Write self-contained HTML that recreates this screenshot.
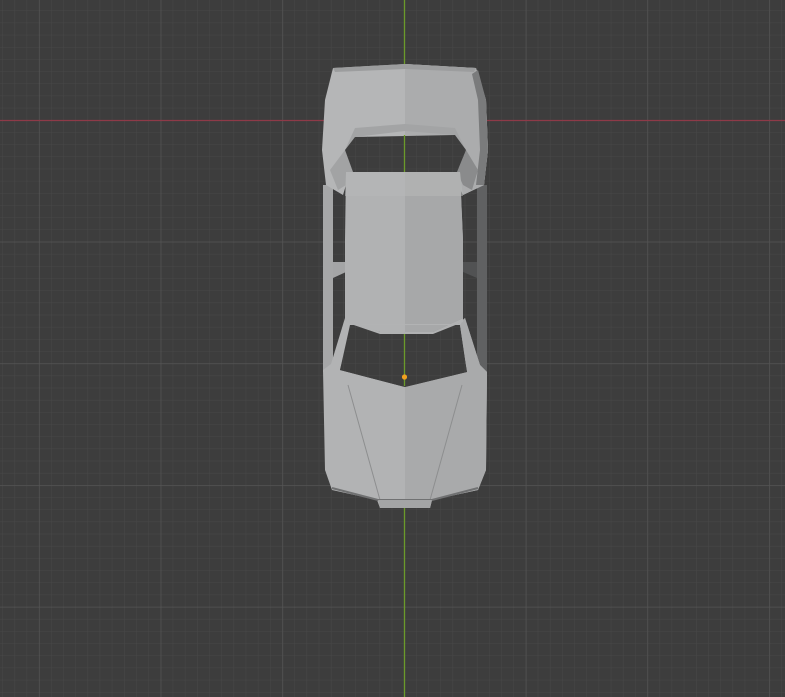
<!DOCTYPE html>
<html><head><meta charset="utf-8"><style>
html,body{margin:0;padding:0;background:#3d3d3d;width:785px;height:697px;overflow:hidden}
svg{display:block}
</style></head><body>
<svg width="785" height="697" viewBox="0 0 785 697" xmlns="http://www.w3.org/2000/svg">
<defs>
<pattern id="minor" x="2.3" y="-1.7" width="12.17" height="12.17" patternUnits="userSpaceOnUse">
<path d="M0 0V12.17M0 0H12.17" stroke="#484848" stroke-width="1" fill="none"/>
</pattern>
<pattern id="major" x="39" y="-1.7" width="121.7" height="121.7" patternUnits="userSpaceOnUse">
<path d="M0 0V121.7M0 0H121.7" stroke="#565656" stroke-width="1.2" fill="none"/>
</pattern>
</defs>
<rect width="785" height="697" fill="#3d3d3d"/>
<rect width="785" height="697" fill="url(#minor)"/>
<rect width="785" height="697" fill="url(#major)"/>
<line x1="0" y1="120.5" x2="785" y2="120.5" stroke="#8e3a48" stroke-width="1.3"/>
<line x1="404.5" y1="0" x2="404.5" y2="697" stroke="#6b9a2a" stroke-width="1.3"/>

<!-- side rails -->
<polygon points="323,185 333,185 333,372 323,372" fill="#a6a7a8"/>
<polygon points="477,185 487,185 487,372 477,372" fill="#606162"/>
<polygon points="333,262 346,262 346,272 333,278" fill="#a4a5a6"/>
<polygon points="463,262 477,262 477,278 463,272" fill="#515253"/>

<!-- rear section -->
<path fill="#b5b6b7" d="M333,68 L405,64 L476,68 L486,100 L488,150 L484,185 L463,195 L458,185 L346,185 L343,195 L326,185 L322,150 L325,100 Z"/>
<polygon points="405,64 476,68 486,100 488,150 484,185 463,195 458,185 405,185" fill="#abacad"/>
<polygon points="478,70 486,100 488,150 484,185 476,185 480,150 478,100 472,74" fill="#7a7b7c"/>
<polygon points="333,68 405,64 476,68 474,72 405,69 335,72" fill="#9c9d9e"/>
<polygon points="355,128 405,124 455,128 466,150 455,135 405,131 355,137 345,150" fill="#a3a4a5"/>
<polygon points="345,150 353,172 346,185 338,190 330,170" fill="#a2a3a4"/>
<polygon points="466,150 457,172 463,185 472,190 478,170" fill="#8a8b8c"/>
<path fill="#3d3d3d" d="M355,137 L455,135 L466,150 L457,172 L353,172 L345,150 Z"/>
<path fill="url(#minor)" d="M355,137 L455,135 L466,150 L457,172 L353,172 L345,150 Z"/>
<line x1="404.5" y1="135" x2="404.5" y2="172" stroke="#6b9a2a" stroke-width="1.3"/>

<!-- roof -->
<path fill="#b1b2b3" d="M346,172 L460,172 L463,240 L463,318 L433,332 L380,332 L345,320 L345,240 Z"/>
<path fill="#a7a8a9" d="M405,172 L460,172 L463,240 L463,318 L433,332 L405,332 Z"/>
<polygon points="346,172 460,172 463,196 405,196 345,196" fill="#b6b7b8" opacity="0.6"/>

<!-- front section -->
<path fill-rule="evenodd" fill="#b2b3b4" d="M345,318 L352,324 L458,324 L465,318 L480,365 L487,372 L486,470 L478,490 L432,500 L430,508 L380,508 L377,500 L332,490 L325,470 L323,370 L331,364 Z M350,325 L460,325 L467,372 L405,387 L340,370 Z"/>
<path fill="#a9aaab" d="M405,387 L467,372 L460,325 L465,318 L480,365 L487,372 L486,470 L478,490 L432,500 L430,508 L405,508 Z"/>
<path fill="#3d3d3d" d="M350,332 L460,332 L467,372 L405,387 L340,370 Z"/>
<path fill="url(#minor)" d="M350,332 L460,332 L467,372 L405,387 L340,370 Z"/>
<line x1="404.5" y1="332" x2="404.5" y2="386" stroke="#6b9a2a" stroke-width="1.3"/>
<path fill="#b1b2b3" d="M345,318 L380,332 L433,332 L463,318 L463,322 L433,334 L380,334 L345,322 Z"/>
<path d="M348,385 L380,500 M462,385 L430,500" stroke="#8d8e8f" stroke-width="1" fill="none"/>
<path d="M332,488 L378,500 L432,500 L478,488" stroke="#707172" stroke-width="2" fill="none"/>
<polygon points="378,500 432,500 430,508 380,508" fill="#a4a5a6"/>
<circle cx="404.5" cy="377" r="2.6" fill="#f0a020"/>
</svg>
</body></html>
